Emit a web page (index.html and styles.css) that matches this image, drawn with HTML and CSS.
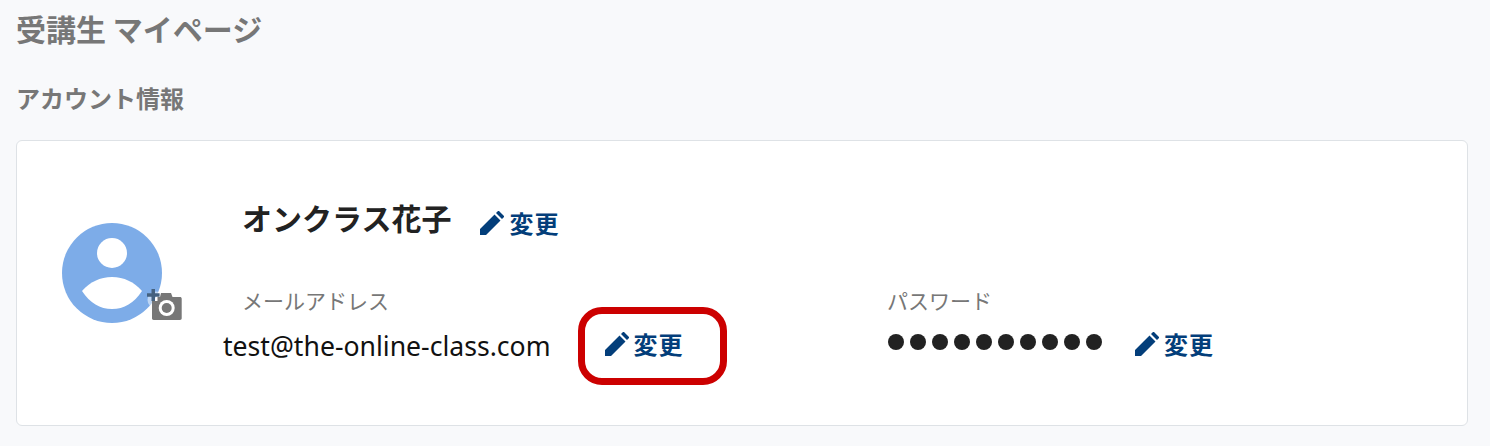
FILE: index.html
```html
<!DOCTYPE html>
<html lang="ja">
<head>
<meta charset="utf-8">
<title>受講生 マイページ</title>
<link rel="stylesheet" href="styles.css">
</head>
<body>
<h1 class="page-title">受講生 マイページ</h1>
<h2 class="section-title">アカウント情報</h2>
<section class="card">
  <div class="avatar">
    <svg class="avatar-img" viewBox="0 0 100 100" width="100" height="100">
      <circle cx="50" cy="50" r="50" fill="#7dace8"/>
      <circle cx="50" cy="30" r="15" fill="#fff"/>
      <path d="M20 68C28 59 38 54 50 54S72 59 80 68C72 80 62 86 50 86S28 80 20 68Z" fill="#fff"/>
    </svg>
    <svg class="camera" viewBox="0 0 36 32" width="36" height="32">
      <circle cx="9" cy="11" r="8.500" fill="#fff" opacity=".5"/>
      <path d="M0 4.300h4.500V0h3.500v4.300h4.600v3.400H8V12H4.500V7.700H0Z" fill="#44617f"/>
      <path d="M5 12h5.500V8h2.500l1-4h10l1.500 4H33c1 0 1.700.7 1.700 1.700V29.300c0 1-.7 1.700-1.700 1.700H6.700c-1 0-1.700-.7-1.700-1.700Z" fill="#777"/>
      <circle cx="19.700" cy="19" r="8" fill="#fff"/>
      <circle cx="19.700" cy="19" r="5" fill="#777"/>
    </svg>
  </div>
  <div class="info">
    <div class="name-row">
      <span class="name">オンクラス花子</span>
      <a class="change" href="#"><svg class="pencil" viewBox="0 0 24 24" width="24" height="24"><path d="M0 24V18L14.500 3.500L20.500 9.500L6 24ZM16 2L18 0H19L24 5V6L22 8Z" fill="#033e7a"/></svg>変更</a>
    </div>
    <div class="fields">
      <div class="field field-mail">
        <div class="label label-mail">メールアドレス</div>
        <div class="value-row">
          <span class="email">test@the-online-class.com</span>
          <a class="change change-boxed" href="#"><svg class="pencil" viewBox="0 0 24 24" width="24" height="24"><path d="M0 24V18L14.500 3.500L20.500 9.500L6 24ZM16 2L18 0H19L24 5V6L22 8Z" fill="#033e7a"/></svg>変更</a>
        </div>
      </div>
      <div class="field">
        <div class="label">パスワード</div>
        <div class="value-row">
          <span class="dots"><i></i><i></i><i></i><i></i><i></i><i></i><i></i><i></i><i></i><i></i></span>
          <a class="change" href="#"><svg class="pencil" viewBox="0 0 24 24" width="24" height="24"><path d="M0 24V18L14.500 3.500L20.500 9.500L6 24ZM16 2L18 0H19L24 5V6L22 8Z" fill="#033e7a"/></svg>変更</a>
        </div>
      </div>
    </div>
  </div>
</section>
</body>
</html>
```
FILE: styles.css
```css
*, *::before { box-sizing: border-box; }
html, body { height: 100%; }
body {
  margin: 0;
  padding: 0 22px 0 16px;
  background: #f8f9fb;
  font-family: "Noto Sans CJK JP", sans-serif;
  color: #222;
  overflow: hidden;
}
.page-title {
  margin: 0;
  padding-top: 8px;
  font-size: 30px;
  line-height: 40px;
  font-weight: 700;
  color: #777;
}
.section-title {
  margin: 0;
  padding-top: 32px;
  font-size: 24px;
  line-height: 36px;
  font-weight: 700;
  color: #777;
}
.card {
  display: flex;
  align-items: flex-start;
  margin-top: 24px;
  height: 286px;
  background: #fff;
  border: 1px solid #dee2e6;
  border-radius: 6px;
}
.avatar {
  position: relative;
  flex: none;
  width: 100px;
  height: 100px;
  margin: 82px 0 0 45px;
}
.avatar-img { display: block; }
.camera {
  position: absolute;
  left: 85px;
  top: 66px;
}
.info {
  flex: 1;
  padding: 51px 0 0 60px;
}
.name-row {
  display: flex;
  align-items: center;
  gap: 29px;
  padding-left: 20px;
  height: 54px;
}
.name {
  margin-bottom: 4px;
  font-size: 30px;
  font-weight: 700;
  line-height: 44px;
}
.change {
  display: inline-flex;
  align-items: center;
  gap: 5px;
  font-size: 24px;
  letter-spacing: 1px;
  line-height: 36px;
  font-weight: 700;
  color: #033e7a;
  text-decoration: none;
}
.pencil { flex: none; }
.name-row .change { padding-top: 8px; }
.fields {
  display: flex;
  margin-top: 38px;
}
.field-mail { width: 665px; }
.label {
  font-size: 21px;
  line-height: 32px;
  color: #777;
}
.label-mail { padding-left: 20px; }
.value-row {
  display: flex;
  align-items: center;
  height: 44px;
  margin-top: 6px;
}
.email {
  padding: 3px 0 0 1px;
  font-family: "Noto Sans", sans-serif;
  font-size: 26.600px;
  color: #111;
}
.change-boxed {
  position: relative;
  margin-left: 54px;
}
.change-boxed::before {
  content: "";
  position: absolute;
  left: -27px;
  top: -19px;
  width: 149px;
  height: 78px;
  border: 7px solid #cc0000;
  border-radius: 24px;
}
.dots {
  display: flex;
  gap: 6px;
  margin-left: 1px;
  margin-right: 33px;
  margin-bottom: 4px;
}
.dots i {
  display: block;
  width: 16px;
  height: 16px;
  border-radius: 50%;
  background: #222;
}
```
